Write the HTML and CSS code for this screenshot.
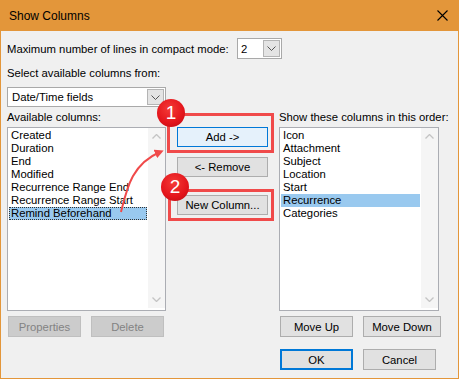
FILE: index.html
```html
<!DOCTYPE html>
<html>
<head>
    <meta charset="utf-8">
    <link rel="stylesheet" href="styles.css">
</head>
<body>
    <div class="window">
        <div class="titlebar">
            <span class="title">Show Columns</span>
            <svg class="close" width="11" height="11" viewBox="0 0 11 11">
                <path d="M0.5,0.5 L10.5,10.5 M10.5,0.5 L0.5,10.5" stroke="#000" stroke-width="1.1" fill="none"/>
            </svg>
        </div>
        <div class="body">
            <div class="row-lines">
                <span class="lines-label">Maximum number of lines in compact mode:</span>
                <div class="combo small">
                    <span>2</span>
                    <span class="combo-btn"><svg width="9" height="5" viewBox="0 0 9 5"><path d="M0.5,0.5 L4.5,4.5 L8.5,0.5" stroke="#555" fill="none"/></svg></span>
                </div>
            </div>
            <div class="label sel-label">Select available columns from:</div>
            <div class="combo wide">
                <span>Date/Time fields</span>
                <span class="combo-btn"><svg width="9" height="5" viewBox="0 0 9 5"><path d="M0.5,0.5 L4.5,4.5 L8.5,0.5" stroke="#555" fill="none"/></svg></span>
            </div>

            <div class="columns">
                <div class="col col-left">
                    <div class="label">Available columns:</div>
                    <div class="listbox">
                        <ul class="items">
                            <li>Created</li>
                            <li>Duration</li>
                            <li>End</li>
                            <li>Modified</li>
                            <li>Recurrence Range End</li>
                            <li>Recurrence Range Start</li>
                            <li class="selected focused">Remind Beforehand</li>
                        </ul>
                        <div class="scrollbar">
                            <svg width="9" height="5" viewBox="0 0 9 5"><path d="M0.5,4.5 L4.5,0.5 L8.5,4.5" stroke="#c4c4c4" stroke-width="1.3" fill="none"/></svg>
                            <svg width="9" height="5" viewBox="0 0 9 5"><path d="M0.5,0.5 L4.5,4.5 L8.5,0.5" stroke="#c4c4c4" stroke-width="1.3" fill="none"/></svg>
                        </div>
                    </div>
                    <div class="btn-row">
                        <div class="btn disabled w73 first">Properties</div>
                        <div class="btn disabled w73">Delete</div>
                    </div>
                </div>

                <div class="col col-mid">
                    <div class="btn btn-add">Add -&gt;</div>
                    <div class="btn btn-remove">&lt;- Remove</div>
                    <div class="btn btn-new">New Column...</div>
                </div>

                <div class="col col-right">
                    <div class="label">Show these columns in this order:</div>
                    <div class="listbox right">
                        <ul class="items">
                            <li>Icon</li>
                            <li>Attachment</li>
                            <li>Subject</li>
                            <li>Location</li>
                            <li>Start</li>
                            <li class="selected">Recurrence</li>
                            <li>Categories</li>
                        </ul>
                        <div class="scrollbar">
                            <svg width="9" height="5" viewBox="0 0 9 5"><path d="M0.5,4.5 L4.5,0.5 L8.5,4.5" stroke="#c4c4c4" stroke-width="1.3" fill="none"/></svg>
                            <svg width="9" height="5" viewBox="0 0 9 5"><path d="M0.5,0.5 L4.5,4.5 L8.5,0.5" stroke="#c4c4c4" stroke-width="1.3" fill="none"/></svg>
                        </div>
                    </div>
                    <div class="btn-row">
                        <div class="btn w73 first">Move Up</div>
                        <div class="btn w78">Move Down</div>
                    </div>
                    <div class="btn-row ok-row">
                        <div class="btn btn-ok w73 first">OK</div>
                        <div class="btn w73">Cancel</div>
                    </div>
                </div>
            </div>
        </div>

        <!-- annotations drawn over the dialog -->
        <svg class="annot" width="459" height="379" viewBox="0 0 459 379">
            <defs>
                <marker id="ah" markerWidth="9" markerHeight="9" refX="5" refY="4.5" orient="auto" markerUnits="userSpaceOnUse">
                    <path d="M0,0 L9,4.5 L0,9 z" fill="#f04a4a"/>
                </marker>
            </defs>
            <rect x="168.5" y="114.5" width="104" height="37" fill="none" stroke="#f04a4a" stroke-width="3"/>
            <rect x="169.5" y="190.5" width="103" height="29" fill="none" stroke="#f04a4a" stroke-width="3"/>
            <path d="M121,212 C127,188 132,164 160,152" fill="none" stroke="#f04a4a" stroke-width="2" marker-end="url(#ah)"/>
        </svg>
        <div class="badge b1">1</div>
        <div class="badge b2">2</div>
    </div>
</body>
</html>
```

FILE: styles.css
```css
* {
    margin: 0;
    padding: 0;
    box-sizing: border-box;
}

body {
    font-family: "Liberation Sans", Arial, sans-serif;
    font-size: 11.3px;
    color: #000;
    background: #fff;
}

.window {
    position: relative;
    width: 459px;
    height: 379px;
    background: #e3963a;
    padding: 0 1px 1px;
    display: flex;
    flex-direction: column;
}

.titlebar {
    height: 31px;
    flex: none;
    display: flex;
    align-items: center;
    justify-content: space-between;
    padding: 0 10px 0 8px;
}

.title {
    font-size: 12px;
}

.body {
    flex: 1;
    background: #f0f0f0;
    padding: 7px 6px 0;
}

.row-lines {
    display: flex;
    align-items: center;
    height: 21px;
    gap: 4px;
}

.lines-label {
    width: 226px;
    white-space: nowrap;
}

.label {
    line-height: 14px;
    height: 14px;
    white-space: nowrap;
}

.sel-label {
    margin-top: 7px;
}

.combo {
    height: 21px;
    border: 1px solid #a9a9a9;
    background: #fff;
    display: flex;
    align-items: center;
    justify-content: space-between;
    padding: 0 1px 0 3px;
}

.combo.small {
    width: 45px;
}

.combo.wide {
    margin-top: 7px;
    width: 159px;
    height: 20px;
    padding-left: 4px;
}

.combo-btn {
    width: 17px;
    height: 17px;
    background: #e4e4e4;
    border: 1px solid #b4b4b4;
    display: flex;
    align-items: center;
    justify-content: center;
}

.combo.wide .combo-btn {
    height: 16px;
}

.columns {
    display: flex;
    margin-top: 3px;
}

.col {
    display: flex;
    flex-direction: column;
}

.col-left {
    width: 159px;
}

.col-mid {
    width: 92px;
    margin-left: 11px;
    padding-top: 17px;
}

.col-right {
    width: 164px;
    margin-left: 10px;
}

.listbox {
    margin-top: 3px;
    height: 184px;
    border: 1px solid #abadb3;
    background: #fff;
    display: flex;
}

.listbox.right {
    width: 160px;
}

.items {
    list-style: none;
    flex: 1;
    padding: 1px;
}

.items li {
    line-height: 13px;
    height: 13px;
    padding-left: 2px;
    white-space: nowrap;
}

.items li.selected {
    background: #99c9ef;
}

.items li.focused {
    outline: 1px dotted #333;
    outline-offset: -1px;
}

.scrollbar {
    width: 17px;
    margin: 0 0 2px;
    background: #f5f5f5;
    display: flex;
    flex-direction: column;
    justify-content: space-between;
    align-items: center;
    padding: 6px 0 6px;
}

.btn-row {
    display: flex;
    margin-top: 5px;
}

.ok-row {
    margin-top: 12px;
}

.btn {
    height: 21px;
    background: #e1e1e1;
    border: 1px solid #adadad;
    display: flex;
    align-items: center;
    justify-content: center;
    white-space: nowrap;
    margin-left: 10px;
}

.btn.first {
    margin-left: 1px;
}

.w73 {
    width: 73px;
}

.w78 {
    width: 78px;
}

.btn.disabled {
    background: #cccccc;
    border-color: #bfbfbf;
    color: #838383;
}

.col-mid .btn {
    margin-left: 0;
    width: 91px;
    height: 20px;
}

.col-mid .btn-add {
    background: #e5f1fb;
    border-color: #0078d7;
}

.col-mid .btn-remove {
    margin-top: 10px;
}

.col-mid .btn-new {
    margin-top: 18px;
}

.btn-ok {
    border: 2px solid #0078d7;
}

.annot {
    position: absolute;
    top: 0;
    left: 0;
    pointer-events: none;
}

.badge {
    position: absolute;
    width: 28px;
    height: 28px;
    border-radius: 50%;
    background: radial-gradient(circle at 45% 35%, #f43a36 0%, #e3141b 60%, #b20d12 100%);
    color: #fff;
    font-family: "Liberation Sans", Arial, sans-serif;
    font-size: 19px;
    line-height: 28px;
    text-align: center;
}

.b1 {
    left: 157px;
    top: 99px;
}

.b2 {
    left: 161px;
    top: 173px;
}
```
